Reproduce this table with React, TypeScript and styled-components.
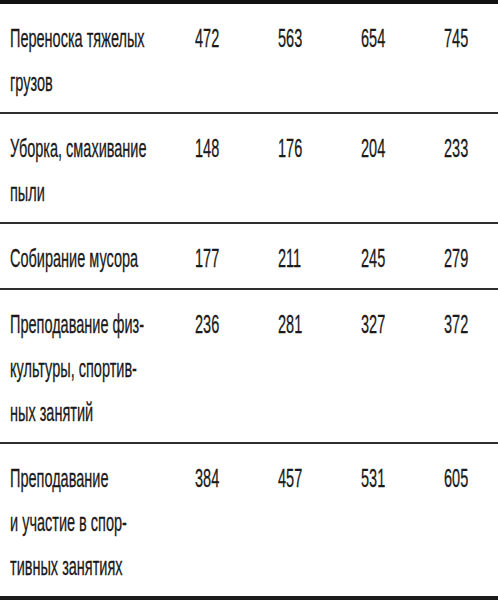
import React from "react";
import styled, { createGlobalStyle } from "styled-components";

type Row = {
  label: string[];
  values: number[];
};

const rows: Row[] = [
  { label: ["Переноска тяжелых", "грузов"], values: [472, 563, 654, 745] },
  { label: ["Уборка, смахивание", "пыли"], values: [148, 176, 204, 233] },
  { label: ["Собирание мусора"], values: [177, 211, 245, 279] },
  {
    label: ["Преподавание физ-", "культуры, спортив-", "ных занятий"],
    values: [236, 281, 327, 372],
  },
  {
    label: ["Преподавание", "и участие в спор-", "тивных занятиях"],
    values: [384, 457, 531, 605],
  },
];

const GlobalStyle = createGlobalStyle`
  html, body {
    margin: 0;
    padding: 0;
    background: #ffffff;
    overflow: hidden;
  }
  body {
    font-family: "Liberation Sans", Arial, sans-serif;
    color: #1a1a1a;
  }
`;

const Table = styled.div`
  width: 498px;
  overflow: hidden;
  border-top: 4px solid #111111;
  border-bottom: 4px solid #1a1a1a;
`;

const TableRow = styled.div`
  display: grid;
  grid-template-columns: 185px repeat(4, 83px);
  padding: 12px 0 8px 10px;
  border-top: 2px solid #2e2e2e;

  &:first-child {
    border-top: none;
  }
`;

const Cell = styled.div`
  font-size: 25px;
  line-height: 44px;
  white-space: nowrap;
  overflow: hidden;
`;

// the face in the picture is a narrow one, so the glyphs get squeezed
const Narrow = styled.span`
  display: inline-block;
  transform: scaleX(0.58);
  transform-origin: left center;
  -webkit-text-stroke: 0.3px #1a1a1a;
`;

export default function App() {
  return (
    <>
      <GlobalStyle />
      <Table>
        {rows.map((row) => (
          <TableRow key={row.label.join(" ")}>
            <Cell>
              {row.label.map((line) => (
                <div key={line}>
                  <Narrow>{line}</Narrow>
                </div>
              ))}
            </Cell>
            {row.values.map((v, i) => (
              <Cell key={i}>
                <Narrow>{v}</Narrow>
              </Cell>
            ))}
          </TableRow>
        ))}
      </Table>
    </>
  );
}
